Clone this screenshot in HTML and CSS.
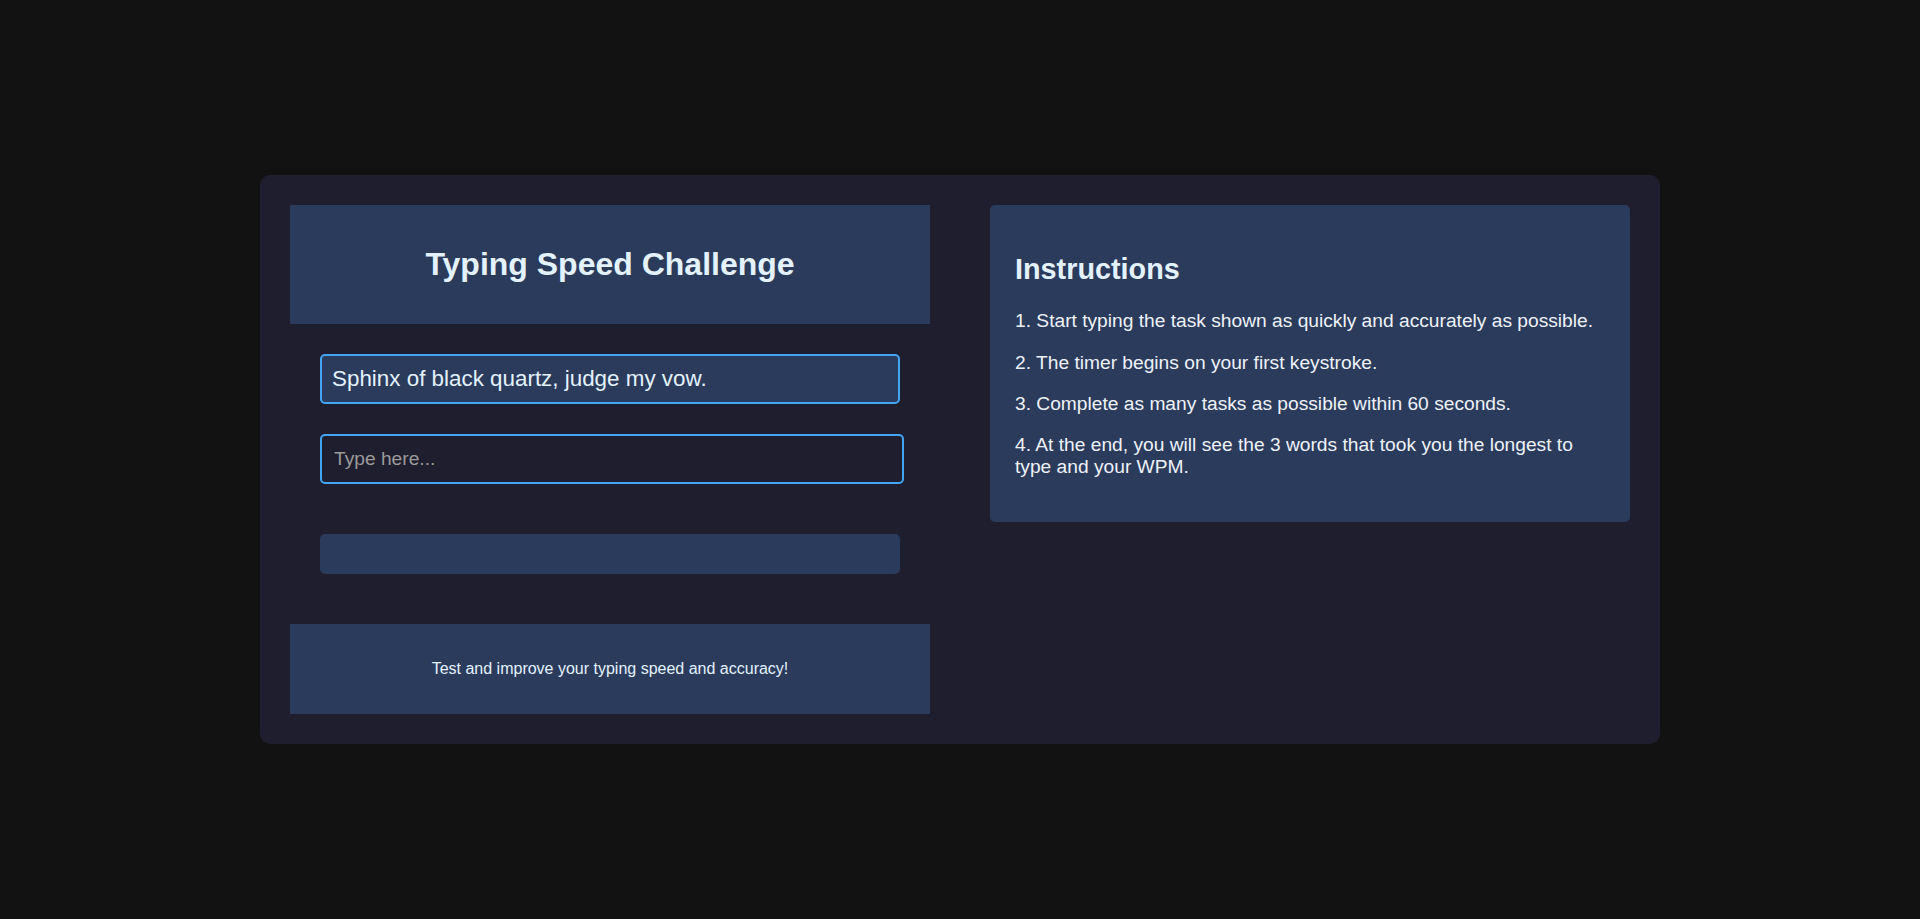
FILE: index.html
```html
<!DOCTYPE html>
<html lang="en">
<head>
<meta charset="utf-8">
<title>Typing Speed Challenge</title>
<link rel="stylesheet" href="styles.css">
</head>
<body>
<div class="card">
  <section class="game">
    <header class="game-header">
      <h1>Typing Speed Challenge</h1>
    </header>
    <main class="game-main">
      <div class="task">Sphinx of black quartz, judge my vow.</div>
      <input class="typing-input" type="text" placeholder="Type here...">
      <div class="progress"></div>
    </main>
    <footer class="game-footer">
      <p>Test and improve your typing speed and accuracy!</p>
    </footer>
  </section>
  <aside class="instructions">
    <h2>Instructions</h2>
    <p>1. Start typing the task shown as quickly and accurately as possible.</p>
    <p>2. The timer begins on your first keystroke.</p>
    <p>3. Complete as many tasks as possible within 60 seconds.</p>
    <p>4. At the end, you will see the 3 words that took you the longest to type and your WPM.</p>
  </aside>
</div>
</body>
</html>
```

FILE: styles.css
```css
* {
  box-sizing: border-box;
}

html, body {
  height: 100%;
}

body {
  margin: 0;
  background: #121212;
  font-family: "Liberation Sans", Arial, sans-serif;
  color: #e3f2fd;
  display: flex;
  align-items: center;
  justify-content: center;
}

.card {
  width: 1400px;
  background: #1e1e2e;
  border-radius: 10px;
  padding: 30px;
  display: grid;
  grid-template-columns: 1fr 1fr;
  align-items: start;
  column-gap: 60px;
}

.game {
  display: flex;
  flex-direction: column;
  min-width: 0;
}

.game-header {
  background: #2b3b5c;
  padding: 20px;
  text-align: center;
}

.game-header h1 {
  font-size: 32px;
  margin: 21.44px 0;
  color: #e3f2fd;
}

.game-main {
  padding: 30px;
}

.task {
  font-size: 22.4px;
  padding: 10px;
  border: 2px solid #42a5f5;
  border-radius: 5px;
  background: #2b3b5c;
  color: #e3f2fd;
  margin-bottom: 30px;
}

.typing-input {
  display: block;
  width: calc(100% + 4px);
  font-family: "Liberation Sans", Arial, sans-serif;
  font-size: 19.2px;
  padding: 12px;
  border: 2px solid #42a5f5;
  border-radius: 5px;
  background: #1e1e2e;
  color: #e3f2fd;
  outline: none;
  margin-bottom: 50px;
}

.typing-input::placeholder {
  color: #9a9a9a;
}

.progress {
  height: 40px;
  background: #2b3b5c;
  border-radius: 5px;
  margin-bottom: 20px;
}

.game-footer {
  background: #2b3b5c;
  padding: 20px;
  text-align: center;
}

.game-footer p {
  margin: 16px 0;
  font-size: 16px;
}

.instructions {
  min-width: 0;
  background: #2b3b5c;
  border-radius: 5px;
  padding: 25px;
}

.instructions h2 {
  font-size: 28.8px;
  margin: 23.9px 0;
  color: #e3f2fd;
}

.instructions p {
  font-size: 19.2px;
  margin: 19.2px 0;
  color: #eef2f8;
}
```
